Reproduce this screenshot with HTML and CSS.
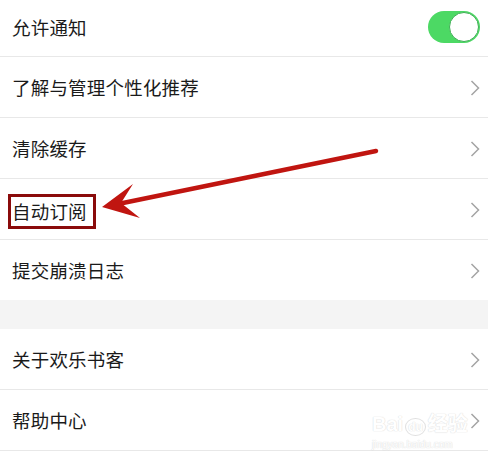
FILE: index.html
```html
<!DOCTYPE html>
<html lang="zh-CN">
<head>
    <meta charset="UTF-8">
    <meta name="viewport" content="width=device-width, initial-scale=1.0">
    <title>设置</title>
    <link rel="stylesheet" href="styles.css">
</head>
<body>

    <!-- First group of settings -->
    <div class="group">
        <div class="row first">
            <span class="label">允许通知</span>
            <span class="switch on"><span class="knob"></span></span>
        </div>
        <div class="row">
            <span class="label">了解与管理个性化推荐</span>
            <svg class="chevron" width="10" height="16" viewBox="0 0 10 16"><polyline points="1.5,1 8.5,8 1.5,15"/></svg>
        </div>
        <div class="row">
            <span class="label">清除缓存</span>
            <svg class="chevron" width="10" height="16" viewBox="0 0 10 16"><polyline points="1.5,1 8.5,8 1.5,15"/></svg>
        </div>
        <div class="row">
            <span class="label marked">自动订阅</span>
            <svg class="chevron" width="10" height="16" viewBox="0 0 10 16"><polyline points="1.5,1 8.5,8 1.5,15"/></svg>
        </div>
        <div class="row last">
            <span class="label">提交崩溃日志</span>
            <svg class="chevron" width="10" height="16" viewBox="0 0 10 16"><polyline points="1.5,1 8.5,8 1.5,15"/></svg>
        </div>
    </div>

    <div class="gap"></div>

    <!-- Second group -->
    <div class="group">
        <div class="row">
            <span class="label">关于欢乐书客</span>
            <svg class="chevron" width="10" height="16" viewBox="0 0 10 16"><polyline points="1.5,1 8.5,8 1.5,15"/></svg>
        </div>
        <div class="row">
            <span class="label">帮助中心</span>
            <svg class="chevron" width="10" height="16" viewBox="0 0 10 16"><polyline points="1.5,1 8.5,8 1.5,15"/></svg>
        </div>
    </div>

    <!-- Red annotation arrow -->
    <svg class="arrow" width="488" height="467" viewBox="0 0 488 467">
        <line x1="376" y1="151" x2="118" y2="204" stroke="#c01510" stroke-width="4.5" stroke-linecap="round"/>
        <polygon points="102,207 133,184 121,203 140,218" fill="#c01510"/>
    </svg>

    <!-- Watermark -->
    <div class="watermark">
        <div class="wm-logo">Bai<span class="wm-du">du</span>经验</div>
        <div class="wm-url">jingyan.baidu.com</div>
    </div>

</body>
</html>
```

FILE: styles.css
```css
body {
    margin: 0;
    background: #fff;
    font-family: "Noto Sans CJK SC", "Noto Sans", sans-serif;
    color: #1a1a1a;
    position: relative;
    width: 488px;
    height: 467px;
    overflow: hidden;
}

.group {
    background: #fff;
}

.row {
    height: 60px;
    display: flex;
    align-items: center;
    justify-content: space-between;
    padding: 0 8px 0 12px;
    border-bottom: 1px solid #e8e8e8;
}

.row.first {
    height: 57px;
    margin-top: -1px;
}

.row.last {
    border-bottom: none;
}

.label {
    font-size: 18.5px;
    letter-spacing: 0.2px;
    line-height: 1;
}

/* Annotated item with a dark red frame */
.label.marked {
    border: 3px solid #8a0b0b;
    padding: 5px 6px 5px 1px;
    margin-left: -4px;
    margin-top: 5px;
}

.chevron {
    fill: none;
    stroke: #a4a4a4;
    stroke-width: 1.5;
    margin-top: 2px;
}

/* iOS style switch */
.switch {
    width: 52px;
    height: 32px;
    border-radius: 16px;
    background: #4cd964;
    position: relative;
    margin-top: -2px;
}

.switch .knob {
    position: absolute;
    right: 1px;
    top: 1px;
    width: 28px;
    height: 28px;
    border-radius: 50%;
    background: #fff;
    border: 1px solid #3fae55;
}

.gap {
    height: 29px;
    background: #f4f4f4;
}

.arrow {
    position: absolute;
    left: 0;
    top: 0;
    pointer-events: none;
}

.watermark {
    position: absolute;
    left: 372px;
    top: 412px;
    color: #fff;
    text-shadow: 0 0 1px #c8c8c8, 0 0 1px #c8c8c8;
    font-family: "Liberation Sans", "Noto Sans CJK SC", sans-serif;
    opacity: 0.6;
}

.wm-logo {
    font-size: 20px;
    font-weight: bold;
    line-height: 24px;
}

.wm-du {
    font-size: 12px;
    border: 1px solid #ccc;
    border-radius: 50%;
    padding: 1px 2px;
    margin: 0 2px;
}

.wm-url {
    font-size: 10px;
    line-height: 12px;
}
```
